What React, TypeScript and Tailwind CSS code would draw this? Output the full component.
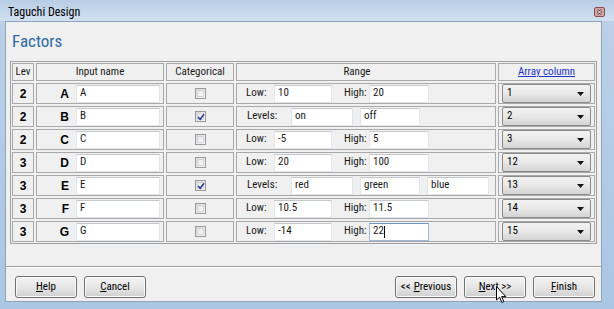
import React from "react";

type Row = {
  lev: string;
  name: string;
  cat: boolean;
  range?: [string, string];
  levels?: string[];
  col: string;
  focus?: boolean;
};

const rows: Row[] = [
  { lev: "2", name: "A", cat: false, range: ["10", "20"], col: "1" },
  { lev: "2", name: "B", cat: true, levels: ["on", "off"], col: "2" },
  { lev: "2", name: "C", cat: false, range: ["-5", "5"], col: "3" },
  { lev: "3", name: "D", cat: false, range: ["20", "100"], col: "12" },
  { lev: "3", name: "E", cat: true, levels: ["red", "green", "blue"], col: "13" },
  { lev: "3", name: "F", cat: false, range: ["10.5", "11.5"], col: "14" },
  { lev: "3", name: "G", cat: false, range: ["-14", "22"], col: "15", focus: true },
];

const levelWidths = ["w-[62px]", "w-[60px]", "w-[62px]"];

function TextBox({ value, width, focus }: { value: string; width: string; focus?: boolean }) {
  return (
    <div
      className={`${width} h-[18px] bg-white border flex items-center pl-[3px] text-[11px] text-[#1a1a1a] ${
        focus ? "border-[#9cb8da] border-t-[#6f98c8]" : "border-[#e2e5e9] border-t-[#c4c7cc]"
      }`}
    >
      {value}
      {focus && <span className="w-px h-[12px] bg-black" />}
    </div>
  );
}

function CheckBox({ checked }: { checked: boolean }) {
  return (
    <div className="relative w-[11px] h-[11px] border border-[#9a9a9a] bg-gradient-to-br from-[#dadada] to-[#f7f7f7] p-px">
      <div className="w-full h-full border border-[#d2d4da] bg-gradient-to-br from-[#e6e6ea] to-[#fbfbfb]" />
      {checked && (
        <svg className="absolute left-[1px] top-[1px]" width="8" height="8" viewBox="0 0 8 8">
          <path d="M1 4 L3.2 6.3 L7 1.2" fill="none" stroke="#27348f" strokeWidth="1.5" />
        </svg>
      )}
    </div>
  );
}

function Combo({ value }: { value: string }) {
  return (
    <div className="w-[89px] h-[19px] rounded-[2px] border border-[#8a8a8a] bg-gradient-to-b from-[#f3f3f3] via-[#e8e8e8] to-[#d4d4d4] flex items-center justify-between pl-[4px] pr-[6px] text-[11px] text-black">
      <span>{value}</span>
      <svg width="7" height="4" viewBox="0 0 7 4">
        <path d="M0 0 H7 L3.5 4 Z" fill="#111" />
      </svg>
    </div>
  );
}

function Button({ children }: { children: React.ReactNode }) {
  return (
    <div className="w-[62px] h-[22px] rounded-[3px] border border-[#707070] bg-gradient-to-b from-[#f4f4f4] via-[#e6e6e6] to-[#d0d0d0] flex items-center justify-center text-[11px] text-black shadow-[inset_0_0_0_1px_#fbfbfb]">
      {children}
    </div>
  );
}

const cell = "border border-[#a9a9a9] bg-[#f0f0f0] flex items-center";

export default function App() {
  return (
    <div className="relative w-[614px] h-[309px] overflow-hidden flex flex-col bg-gradient-to-b from-[#bcd1e8] to-[#a9c6e3] font-['Liberation_Sans_Narrow','Roboto_Condensed',sans-serif]">
      {/* title bar */}
      <div className="h-[21px] flex items-center justify-between pl-[8px] pr-[9px] pt-[3px] bg-gradient-to-b from-[#b8cde5] to-[#d2e1f1]">
        <span className="text-[12px] text-black">Taguchi Design</span>
        <svg width="11" height="10" viewBox="0 0 11 10">
          <rect x="0.5" y="0.5" width="10" height="9" rx="1.5" fill="#d2a4a4" stroke="#8a4e4e" />
          <path d="M3.5 3 L7.5 7 M7.5 3 L3.5 7" stroke="#5a2a2a" strokeWidth="2.2" />
          <path d="M3.5 3 L7.5 7 M7.5 3 L3.5 7" stroke="#ffffff" strokeWidth="1" />
        </svg>
      </div>

      {/* content */}
      <div className="flex-1 ml-[5px] mr-[12px] mb-[7px] border border-[#8fa3b8] bg-[#f0f0f0] flex flex-col px-[4px] pt-[9px]">
        <div className="pl-[2px] h-[21px] leading-[21px] text-[17px] text-[#2e6aa6]">Factors</div>

        <div className="mt-[9px] w-[587px] border border-[#a0a0a0] p-px">
          <div className="grid grid-cols-[22px_128px_68px_260px_97px] grid-rows-[18px_repeat(7,21px)] gap-[2px] text-[11px] text-[#1a1a1a]">
            <div className={`${cell} justify-center`}>Lev</div>
            <div className={`${cell} justify-center`}>Input name</div>
            <div className={`${cell} justify-center`}>Categorical</div>
            <div className={`${cell} justify-center pr-[18px]`}>Range</div>
            <div className={`${cell} justify-center`}>
              <span className="text-[#1c36c8] underline">Array column</span>
            </div>

            {rows.map((r) => (
              <React.Fragment key={r.name}>
                <div className={`${cell} justify-center font-['Liberation_Sans',sans-serif] text-[12px] font-bold text-black`}>{r.lev}</div>
                <div className={`${cell} justify-end gap-[7px] pr-[3px]`}>
                  <span className="font-['Liberation_Sans',sans-serif] text-[12px] font-bold text-black">{r.name}</span>
                  <TextBox value={r.name} width="w-[84px]" />
                </div>
                <div className={`${cell} justify-center`}>
                  <CheckBox checked={r.cat} />
                </div>
                <div className={cell}>
                  {r.range ? (
                    <div className="flex items-center pl-[9px]">
                      <span className="w-[28px]">Low:</span>
                      <TextBox value={r.range[0]} width="w-[58px]" />
                      <span className="w-[25px] ml-[12px]">High:</span>
                      <TextBox value={r.range[1]} width="w-[60px]" focus={r.focus} />
                    </div>
                  ) : (
                    <div className="flex items-center pl-[10px]">
                      <span className="w-[44px]">Levels:</span>
                      <div className="flex items-center gap-[7px]">
                        {r.levels!.map((l, i) => (
                          <TextBox key={l} value={l} width={levelWidths[i]} />
                        ))}
                      </div>
                    </div>
                  )}
                </div>
                <div className={`${cell} pl-[3px]`}>
                  <Combo value={r.col} />
                </div>
              </React.Fragment>
            ))}
          </div>
        </div>

        <div className="mt-[22px] -mx-[4px] border-t border-t-[#a0a0a0] border-b border-b-white" />

        <div className="mt-[8px] flex items-center pl-[5px] pr-[2px]">
          <div className="flex gap-[7px]">
            <Button>
              <span className="underline">H</span>elp
            </Button>
            <Button>
              <span className="underline">C</span>ancel
            </Button>
          </div>
          <div className="ml-auto flex gap-[7px]">
            <Button>
              &lt;&lt; <span className="underline ml-[3px]">P</span>revious
            </Button>
            <Button>
              <span className="underline">N</span>ext &gt;&gt;
            </Button>
            <Button>
              <span className="underline">F</span>inish
            </Button>
          </div>
        </div>
      </div>

      {/* mouse pointer */}
      <svg className="absolute left-[496px] top-[286px]" width="11" height="18" viewBox="0 0 11 18">
        <path d="M0.5 0.5 V14 L3.6 11.2 L5.8 16.5 L7.8 15.6 L5.6 10.6 H9.8 Z" fill="#fff" stroke="#000" strokeWidth="1" />
      </svg>
    </div>
  );
}
